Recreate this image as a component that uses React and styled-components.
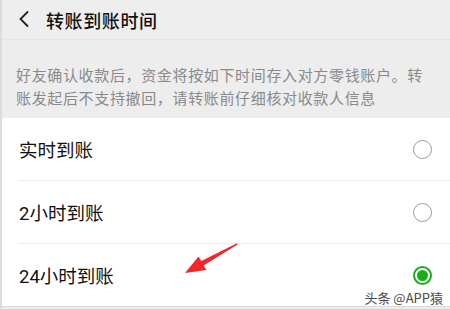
import React from "react";
import styled, { createGlobalStyle } from "styled-components";

const Global = createGlobalStyle`
  html, body { margin: 0; padding: 0; background: #ededed; }
  * { box-sizing: border-box; }
`;

const Page = styled.div`
  position: relative;
  width: 450px;
  height: 309px;
  overflow: hidden;
  background: #ededed;
  border-left: 2px solid #dcdcdc;
  font-family: Roboto, "Noto Sans CJK SC", sans-serif;
`;

const Header = styled.div`
  height: 40px;
  display: flex;
  align-items: center;
  padding-left: 15px;
  border-bottom: 1px solid #e4e4e4;
  background: #eeeeee;
`;

const Back = styled.svg`
  width: 14px;
  height: 18px;
  margin-right: 15px;
  margin-top: -1px;
`;

const Title = styled.div`
  font-size: 18px;
  font-weight: 500;
  color: #111;
  letter-spacing: 0.6px;
`;

const Desc = styled.div`
  padding: 25px 18px 7px 14px;
  font-size: 15px;
  line-height: 23px;
  color: #8a8a8a;
  letter-spacing: 0.65px;
`;

const List = styled.div`
  background: #fff;
  border-bottom: 1px solid #dadada;
`;

const Row = styled.div`
  margin-left: 16px;
  padding-right: 18px;
  display: flex;
  align-items: center;
  justify-content: space-between;
  border-top: ${(p) => (p.$first ? "none" : "1px solid #ececec")};
  height: ${(p) => (p.$first ? "62px" : "63px")};
`;

const Label = styled.div`
  font-size: 18.5px;
  color: #111;
  padding-left: 1px;
`;

const Radio = styled.div`
  width: 19px;
  height: 19px;
  border-radius: 50%;
  border: ${(p) => (p.$on ? "2px solid #1aad19" : "1.3px solid #9a9a9a")};
  display: flex;
  align-items: center;
  justify-content: center;
  &::after {
    content: "";
    display: ${(p) => (p.$on ? "block" : "none")};
    width: 11px;
    height: 11px;
    border-radius: 50%;
    background: #1aad19;
  }
`;

const Arrow = styled.svg`
  position: absolute;
  left: 0;
  top: 0;
  width: 450px;
  height: 309px;
  pointer-events: none;
`;

const Watermark = styled.div`
  position: absolute;
  right: 7px;
  top: 288px;
  font-size: 13px;
  color: #4a4a4a;
  text-shadow: 0 0 2px #fff, 0 0 2px #fff;
  font-family: "Noto Sans CJK SC", sans-serif;
`;

const options = [
  { label: "实时到账", on: false },
  { label: "2小时到账", on: false },
  { label: "24小时到账", on: true },
];

export default function App() {
  return (
    <Page>
      <Global />
      <Header>
        <Back viewBox="0 0 14 18">
          <path d="M11 1.5 L3.5 9 L11 16.5" fill="none" stroke="#222" strokeWidth="1.8" />
        </Back>
        <Title>转账到账时间</Title>
      </Header>
      <Desc>好友确认收款后，资金将按如下时间存入对方零钱账户。转账发起后不支持撤回，请转账前仔细核对收款人信息</Desc>
      <List>
        {options.map((o, i) => (
          <Row key={o.label} $first={i === 0}>
            <Label>{o.label}</Label>
            <Radio $on={o.on} />
          </Row>
        ))}
      </List>
      <Arrow viewBox="0 0 450 309">
        <polygon
          points="183,273 196.5,256.5 199.3,261.1 235,243.3 235.6,244.6 201.7,265.5 204.5,270"
          fill="#f0282c"
        />
      </Arrow>
      <Watermark>头条 @APP猿</Watermark>
    </Page>
  );
}
